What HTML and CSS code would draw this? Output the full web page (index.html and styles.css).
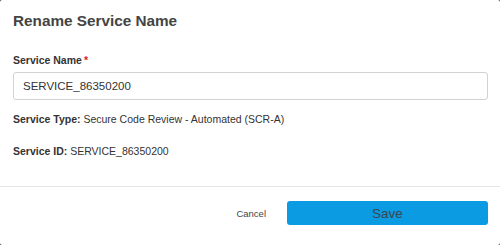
FILE: index.html
```html
<!DOCTYPE html>
<html>
<head>
<meta charset="utf-8">
<link rel="stylesheet" href="styles.css">
</head>
<body>
<div class="modal">
  <div class="modal-body">
    <h1 class="title">Rename Service Name</h1>
    <label class="label">Service Name<span class="req">*</span></label>
    <div class="input">SERVICE_86350200</div>
    <p class="info"><b>Service Type:</b> Secure Code Review - Automated (SCR-A)</p>
    <p class="info"><b>Service ID:</b> SERVICE_86350200</p>
  </div>
  <div class="modal-footer">
    <button class="btn-cancel">Cancel</button>
    <button class="btn-save">Save</button>
  </div>
</div>
</body>
</html>
```

FILE: styles.css
```css
html, body {
  margin: 0;
  padding: 0;
  background: #333;
  width: 500px;
  height: 245px;
  overflow: hidden;
}
.modal {
  width: 500px;
  height: 245px;
  background: #fff;
  border-radius: 2px;
  font-family: "Liberation Sans", Arial, sans-serif;
  color: #333;
  display: flex;
  flex-direction: column;
}
.modal-body {
  padding: 11px 12px 0 13px;
  height: 175px;
  border-bottom: 1px solid #e6e6e6;
}
.title {
  margin: 0;
  font-size: 15.3px;
  font-weight: bold;
  color: #444;
  line-height: 20px;
}
.label {
  display: block;
  margin-top: 22px;
  font-size: 10.5px;
  font-weight: bold;
  color: #333;
  line-height: 14px;
}
.req {
  color: #e0202a;
  margin-left: 2px;
}
.input {
  margin-top: 5px;
  height: 26px;
  border: 1px solid #d2d2d2;
  border-radius: 3px;
  padding: 0 9px;
  font-size: 11.5px;
  line-height: 27px;
  color: #333;
}
.info {
  margin: 12px 0 0;
  font-size: 10.5px;
  line-height: 14px;
  color: #333;
}
.info + .info {
  margin-top: 18px;
}
.modal-footer {
  display: flex;
  align-items: center;
  justify-content: flex-end;
  padding: 14px 12px 0 0;
}
.btn-cancel {
  background: none;
  border: none;
  font-family: inherit;
  font-size: 9.5px;
  color: #444;
  padding: 0;
  margin-right: 21px;
}
.btn-save {
  width: 201px;
  height: 24px;
  background: #0a9be3;
  border: none;
  border-radius: 3px;
  font-family: inherit;
  font-size: 13.5px;
  color: #3d4550;
  padding: 0;
}
```
